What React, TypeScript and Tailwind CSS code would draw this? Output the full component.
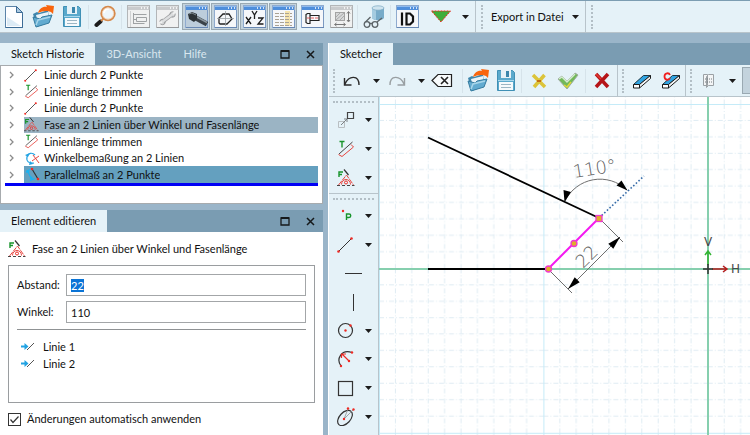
import { useEffect, useRef, type ReactNode } from 'react';
import clsx from 'clsx';

interface IconButtonProps {
  label: string;
  pressed?: boolean;
  children: ReactNode;
}

function IconButton({ label, pressed, children }: IconButtonProps) {
  return (
    <button
      type="button"
      aria-label={label}
      aria-pressed={pressed}
      className={clsx(
        'flex h-[27px] w-7 shrink-0 items-center justify-center',
        pressed && 'border border-[#9aa9b2] bg-[#c3d3dd]'
      )}
    >
      {children}
    </button>
  );
}

function Caret() {
  return (
    <svg width="7" height="4" viewBox="0 0 7 4" className="shrink-0">
      <path d="M0 0h7L3.5 4z" fill="#1c1c1c" />
    </svg>
  );
}

function Separator() {
  return <span className="mx-px h-6 w-px shrink-0 bg-[#d6e3ea]" />;
}

function Grip() {
  return <span className="h-6 w-0 shrink-0 border-l-2 border-dotted border-[#b3bfc6]" />;
}

/* ---------- icons ---------- */

function NewIcon() {
  return (
    <svg width="20" height="24" viewBox="0 0 20 24">
      <path d="M1.500 1.500h11l6 6v15h-17z" fill="#fdfeff" stroke="#5a83a8" />
      <path d="M3 21V12l14 9z" fill="#dcebf5" />
      <path d="M12.500 1.500v6h6z" fill="#a9c8e0" stroke="#3c6c96" />
      <path d="M1.500 22.500h17v-14" fill="none" stroke="#3c6c96" />
    </svg>
  );
}

function OpenIcon() {
  return (
    <svg width="22" height="23" viewBox="0 0 22 23">
      <path d="M1 9l4-2 2 1 9-3 1 12L5 22z" fill="#3f86ac" />
      <path d="M4 10l12-3v7H5z" fill="#e9f3f8" />
      <path d="M1 12l3 10 13-4 3-8-10 2-2 2z" fill="#62abd0" stroke="#357b9f" />
      <path d="M4 20l2-5 12-3" fill="none" stroke="#a8d6ea" strokeWidth="1.500" />
      <path d="M6 8c1-4 5-7 9-6l-1-2 8 1-1 8-2-2c-4-2-9-1-13 1z" fill="#f9650d" />
    </svg>
  );
}

function SaveIcon() {
  return (
    <svg width="20" height="23" viewBox="0 0 20 23">
      <path d="M1.500 1.500h15l2 2v18h-17z" fill="#5aa9cc" stroke="#4090b5" />
      <path d="M5 1h10v8H5z" fill="#e6f2f8" />
      <path d="M10 2h3v6h-3z" fill="#3b86ac" />
      <path d="M3 13h14v8H3z" fill="#f6fafc" />
      <path d="M5 15.500h10M5 18.500h10" stroke="#9cb6c4" />
      <path d="M2 11.500h16" stroke="#aad8ec" />
    </svg>
  );
}

function SearchIcon() {
  return (
    <svg width="22" height="23" viewBox="0 0 22 23">
      <path d="M2.500 20l4-3.500" stroke="#1b1b1b" strokeWidth="4" strokeLinecap="round" />
      <path d="M7 16l2.500-2.500" stroke="#d5894c" strokeWidth="2" />
      <circle cx="14" cy="8.500" r="6.800" fill="#eef6fb" stroke="#d5894c" strokeWidth="1.800" />
      <path d="M10 8a4 4 0 0 1 5-4" stroke="#fff" strokeWidth="2" fill="none" />
      <circle cx="14" cy="8.500" r="5.600" fill="none" stroke="#f3c9a0" strokeWidth="0.700" />
    </svg>
  );
}

function WindowIcon({ muted, children }: { muted?: boolean; children: ReactNode }) {
  return (
    <svg width="23" height="23" viewBox="0 0 23 23">
      <rect x="0.500" y="0.500" width="22" height="22" fill={muted ? '#f0f1f1' : '#f5f7fa'} stroke={muted ? '#b3b6b8' : '#8fabcf'} />
      <rect x="1" y="1" width="21" height="4" fill={muted ? '#c9cbcd' : '#4f8fdc'} />
      <path d="M1 1.500h21" stroke={muted ? '#dcdedf' : '#8fbbee'} />
      <path d="M14 3h1M17 3h1M20 3h1" stroke="#fff" strokeWidth="1.500" />
      <path d="M1 22.500h22V5" fill="none" stroke={muted ? '#97999b' : '#6787b3'} />
      {children}
    </svg>
  );
}

function TreeWindowIcon() {
  return (
    <WindowIcon muted>
      <path d="M6.500 8v11M6.500 9.500h13M6.500 14.500h3M6.500 18.500h11M9.500 12.500h10v4h-10z" stroke="#9fa2a4" fill="none" />
      <path d="M3.500 6v16" stroke="#d0d2d3" />
    </WindowIcon>
  );
}

function WrenchWindowIcon() {
  return (
    <WindowIcon muted>
      <circle cx="6.500" cy="17" r="2.700" fill="#d3d5d6" stroke="#9b9d9f" />
      <circle cx="16.500" cy="9.500" r="2.700" fill="#d3d5d6" stroke="#9b9d9f" />
      <path d="M7 16.500l9-7" stroke="#9b9d9f" strokeWidth="4" />
      <path d="M6 17l11-8" stroke="#dddfe0" strokeWidth="2.500" />
      <path d="M3 18l3-1M17 9l2-2" stroke="#f0f1f1" strokeWidth="2" />
    </WindowIcon>
  );
}

function BoltWindowIcon() {
  return (
    <WindowIcon>
      <rect x="1" y="5" width="21" height="17" fill="#bccddb" />
      <path d="M9 12l13 7" stroke="#3a4248" strokeWidth="5" />
      <path d="M10 11l12 6.500" stroke="#8b979f" strokeWidth="1.500" />
      <path d="M3 9l4-2 5 2v5l-3 3-5-3z" fill="#2b3236" />
      <path d="M4 9l3-1 4 2" fill="none" stroke="#7d8990" />
    </WindowIcon>
  );
}

function SketchWindowIcon() {
  return (
    <WindowIcon>
      <path d="M5 18v-5l4-4h6l3 5-5 5H6z" fill="none" stroke="#222" strokeWidth="1.300" />
      <path d="M11.500 6v15M3 13.500h17" stroke="#979da2" strokeWidth="0.800" />
    </WindowIcon>
  );
}

function XyzWindowIcon() {
  return (
    <WindowIcon>
      <g stroke="#1d1d1d" strokeWidth="1.300" fill="none">
        <path d="M3 12l5 7M8 12l-5 7M9 6l2.500 4L14 6M11.500 10v4M15 13h5l-5 6h5.500" />
      </g>
    </WindowIcon>
  );
}

function TableWindowIcon() {
  return (
    <WindowIcon>
      <rect x="13" y="6" width="5" height="15" fill="#f5e4ae" />
      <path d="M3 8.500h17M3 11.500h17M3 14.500h17M3 17.500h17M3 20.500h17" stroke="#aaa294" strokeDasharray="4 1" />
    </WindowIcon>
  );
}

function ScrewWindowIcon() {
  return (
    <WindowIcon>
      <path d="M5 9.500l1.500-1H9v10H6.500l-1.500-1z M9 10.500h9v5H9" fill="none" stroke="#222" strokeWidth="1.200" />
      <path d="M6 13h11" stroke="#e23b3b" strokeDasharray="3 1" strokeWidth="0.800" />
    </WindowIcon>
  );
}

function HatchWindowIcon() {
  return (
    <WindowIcon muted>
      <rect x="5.500" y="7.500" width="9" height="8" fill="#d6d7d8" stroke="#a3a3a3" />
      <path d="M6 12l4-4M6 15l8-7M10 15l4-4" stroke="#9d9fa0" strokeWidth="0.800" />
      <path d="M18.500 7v9M5 19.500h10" stroke="#777" />
      <path d="M17 8.500l1.500-2 1.500 2M17 15l1.500 2 1.500-2M6.500 18l-2 1.500 2 1.500M13.500 18l2 1.500-2 1.500" fill="none" stroke="#777" />
    </WindowIcon>
  );
}

function GlassesIcon() {
  return (
    <svg width="23" height="24" viewBox="0 0 23 24">
      <path d="M9 3v10c2 3 10 3 12 0V3z" fill="#77abc9" />
      <path d="M9 3v10c1 1 3 2 4 2V3z" fill="#a4cbe0" />
      <ellipse cx="15" cy="3" rx="6" ry="2.200" fill="#cfe4ef" stroke="#7ba8c1" strokeWidth="0.700" />
      <g fill="none" stroke="#5c6468" strokeWidth="1.300">
        <circle cx="4" cy="19.500" r="2.800" />
        <circle cx="12" cy="19.500" r="2.800" />
        <path d="M6.500 18.500h3M2.500 17l5-5M14 17l5-4" />
      </g>
    </svg>
  );
}

function IdWindowIcon() {
  return (
    <WindowIcon>
      <path d="M6 7.500v13" stroke="#111" strokeWidth="2.200" />
      <path d="M10.500 8.500H14l3 3v5l-3 3h-3.500z" fill="none" stroke="#111" strokeWidth="2.200" />
    </WindowIcon>
  );
}

function UndoIcon({ color }: { color: string }) {
  return (
    <svg width="18" height="13" viewBox="0 0 18 13">
      <path d="M2 10C6 1 16 1 16 11M1.500 4v7h7" fill="none" stroke={color} strokeWidth="1.400" />
    </svg>
  );
}

function EraserIcon({ all }: { all?: boolean }) {
  return (
    <svg width="20" height="18" viewBox="0 0 20 18">
      <path d="M1.500 12.500l10-9h7l-11 9z" fill="#2fa4e2" stroke="#1f3542" />
      <path d="M1.500 12.500h6v3.500h-6z" fill="#fff" stroke="#1b1b1b" />
      <path d="M7.500 12.500l11-9v3l-11 9.500z" fill="#f2f5f6" stroke="#1b1b1b" />
      {all && <path d="M9 3C8 .5 3.500.5 3.500 4.500S8 8.500 9 6" fill="none" stroke="#f11f1f" strokeWidth="1.800" />}
    </svg>
  );
}

function LineIcon({ size = 16 }: { size?: number }) {
  return (
    <svg width={size} height={size} viewBox="0 0 16 16">
      <path d="M1.500 14.500l13-13" stroke="#333" />
      <circle cx="1.500" cy="14.500" r="1.300" fill="#ee2a24" />
      <circle cx="14.500" cy="1.500" r="1.300" fill="#ee2a24" />
    </svg>
  );
}

function TrimIcon({ size = 18 }: { size?: number }) {
  return (
    <svg width={size} height={size} viewBox="0 0 18 18">
      <path d="M2.500 1.500h5M5 1.500v6" stroke="#17942b" strokeWidth="1.400" />
      <path d="M2 14L15.500 2" stroke="#444" />
      <path d="M1.500 14.500l3.500 2L16.500 7 14 4.500" fill="none" stroke="#e8443e" />
    </svg>
  );
}

function ChamferIcon({ size = 18 }: { size?: number }) {
  return (
    <svg width={size} height={size} viewBox="0 0 18 18">
      <path d="M2 8V3h4M2 5.500h3" fill="none" stroke="#17942b" strokeWidth="1.400" />
      <path d="M7 0.500l4.500 5.500" stroke="#333" strokeWidth="1.200" />
      <path d="M1.500 16l8-10 7 10" fill="none" stroke="#e8443e" strokeDasharray="5 1" />
      <path d="M4.500 15.500c0-3 2-5 4.500-5s4.500 2 4.500 5" fill="none" stroke="#e8443e" />
      <path d="M0 16.500h17.500" stroke="#444" strokeDasharray="3 2" />
      <circle cx="9" cy="13.500" r="1.500" fill="none" stroke="#ee2a24" />
    </svg>
  );
}

function AngleIcon() {
  return (
    <svg width="16" height="15" viewBox="0 0 16 15">
      <path d="M8 10l7-5M9 4l6 8" stroke="#e8443e" fill="none" />
      <path d="M11 4C8 1 4 2 3 6s2 7 7 6" fill="none" stroke="#23a3e3" strokeWidth="1.200" />
      <path d="M1 4l5-2-2 4zM5 14l1-4 3 3z" fill="#23a3e3" />
    </svg>
  );
}

function ParallelIcon() {
  return (
    <svg width="16" height="15" viewBox="0 0 16 15">
      <path d="M8 2l6 10" stroke="#333" strokeWidth="1.200" />
      <circle cx="8" cy="2" r="1.300" fill="#ee2a24" />
      <circle cx="14" cy="12" r="1.300" fill="#ee2a24" />
      <path d="M3.500 4l4 8M2 4.500l4-2M6 13.500l5-2" stroke="#17b3f4" strokeWidth="1.200" />
      <path d="M2 6l1-3 3 2zM9 13l-3-1 2-3z" fill="#17b3f4" />
    </svg>
  );
}

function LinkedLineIcon() {
  return (
    <svg width="14" height="10" viewBox="0 0 14 10">
      <path d="M0 4.500h4" stroke="#23a3e3" strokeWidth="2" />
      <path d="M3.500 1l4 3.500-4 3.500z" fill="#23a3e3" />
      <path d="M6 8l7-7" stroke="#555" />
    </svg>
  );
}

/* ---------- toolbars ---------- */

function MainToolbar() {
  return (
    <header className="flex h-8 items-center gap-px overflow-hidden border-b border-[#b8c4cb] bg-[#e5f2f8]">
      <IconButton label="Neu"><NewIcon /></IconButton>
      <IconButton label="Öffnen"><OpenIcon /></IconButton>
      <IconButton label="Speichern"><SaveIcon /></IconButton>
      <Separator />
      <IconButton label="Suchen"><SearchIcon /></IconButton>
      <Separator />
      <IconButton label="Struktur"><TreeWindowIcon /></IconButton>
      <IconButton label="Werkzeug"><WrenchWindowIcon /></IconButton>
      <IconButton label="3D-Ansicht" pressed><BoltWindowIcon /></IconButton>
      <IconButton label="Skizze" pressed><SketchWindowIcon /></IconButton>
      <IconButton label="Variablen" pressed><XyzWindowIcon /></IconButton>
      <IconButton label="Tabelle" pressed><TableWindowIcon /></IconButton>
      <IconButton label="Vorschau"><ScrewWindowIcon /></IconButton>
      <IconButton label="Bemaßung"><HatchWindowIcon /></IconButton>
      <Separator />
      <IconButton label="Prüfen"><GlassesIcon /></IconButton>
      <Separator />
      <IconButton label="ID"><IdWindowIcon /></IconButton>
      <button type="button" aria-label="Filter" className="flex h-full shrink-0 items-center gap-2.5 border-r border-[#b8c4cb] pr-1.5 pl-2">
        <svg width="22" height="13" viewBox="0 0 22 13">
          <path d="M1.500 1h19L11 12z" fill="#3fae3a" stroke="#f0291f" strokeDasharray="2 1" />
        </svg>
        <Caret />
      </button>
      <div className="flex h-full shrink-0 items-center border-r border-[#b8c4cb] pr-1.5 pl-1">
        <Grip />
        <button type="button" className="flex items-center gap-2 pl-2">
          Export in Datei
          <Caret />
        </button>
      </div>
      <div className="flex h-full items-center pl-1">
        <Grip />
      </div>
    </header>
  );
}

function SketchToolbar() {
  return (
    <div className="flex h-8 shrink-0 items-center overflow-hidden border-b border-[#b8c4cb] bg-[#e5f2f8] pl-1">
      <Grip />
      <button type="button" aria-label="Rückgängig" className="flex shrink-0 items-center gap-3 pl-2">
        <UndoIcon color="#2b2b2b" />
        <Caret />
      </button>
      <button type="button" aria-label="Wiederholen" className="flex shrink-0 items-center gap-3 pl-2">
        <span className="-scale-x-100"><UndoIcon color="#999fa2" /></span>
        <Caret />
      </button>
      <button type="button" aria-label="Löschen" className="shrink-0 pr-2 pl-1.5">
        <svg width="22" height="15" viewBox="0 0 22 15">
          <path d="M1 7.500l6-6h13.500v12H7z" fill="#f8fbfc" stroke="#222" strokeWidth="1.200" />
          <path d="M10 4l7 7M17 4l-7 7" stroke="#222" strokeWidth="1.600" />
        </svg>
      </button>
      <Separator />
      <IconButton label="Skizze öffnen"><OpenIcon /></IconButton>
      <IconButton label="Skizze speichern"><SaveIcon /></IconButton>
      <Separator />
      <div className="flex shrink-0 items-center gap-px px-0.5">
        <IconButton label="Abbrechen">
          <svg width="16" height="16" viewBox="0 0 16 16">
            <path d="M2 2l12 12M13.500 2L3 14" stroke="#dcc439" strokeWidth="3.500" />
            <path d="M6 8h4" stroke="#c46d12" strokeWidth="2" />
          </svg>
        </IconButton>
        <IconButton label="Übernehmen">
          <svg width="22" height="18" viewBox="0 0 22 18">
            <path d="M1 7l4-3 5 5 8-8 3 2-11 14z" fill="#72b95a" stroke="#9fada0" />
            <path d="M2 7l3-2 5 5 8-8" fill="none" stroke="#d5ecd1" strokeWidth="1.500" />
            <path d="M7 13l3 2 4-5" fill="none" stroke="#e0d838" strokeWidth="1.500" />
          </svg>
        </IconButton>
      </div>
      <Separator />
      <div className="flex h-full shrink-0 items-center border-r border-[#b8c4cb] px-px">
        <IconButton label="Schließen">
          <svg width="16" height="17" viewBox="0 0 16 17">
            <path d="M2 2l12 13M14 2L2 15" stroke="#b51418" strokeWidth="3.500" />
            <path d="M2 2l5 5" stroke="#e23a32" strokeWidth="1.500" />
          </svg>
        </IconButton>
      </div>
      <div className="flex h-full shrink-0 items-center gap-1 border-r border-[#b8c4cb] pl-1">
        <Grip />
        <div className="flex gap-px">
          <IconButton label="Radieren"><EraserIcon /></IconButton>
          <IconButton label="Alles radieren"><EraserIcon all /></IconButton>
        </div>
      </div>
      <div className="flex h-full min-w-0 grow items-center pl-1">
        <Grip />
        <button type="button" aria-label="Ebene" className="flex shrink-0 items-center gap-3.5 pr-1.5 pl-2.5">
          <svg width="13" height="16" viewBox="0 0 13 16">
            <path d="M1.500 1.500h4v11h-4zM6.500 1.500h5v11h-5l-2 2v-11z" fill="#f3f5f6" stroke="#9ba1a5" />
            <path d="M3 6h7M3 9h7" stroke="#777c80" strokeDasharray="1 1" />
          </svg>
          <Caret />
        </button>
        <IconButton label="Raster" pressed>
          <svg width="14" height="14" viewBox="0 0 14 14">
            <path d="M1 3h7M4 0v6" stroke="#23a3e3" strokeWidth="2" />
          </svg>
        </IconButton>
      </div>
    </div>
  );
}

interface ToolProps {
  label: string;
  plain?: boolean;
  children: ReactNode;
}

function Tool({ label, plain, children }: ToolProps) {
  return (
    <button
      type="button"
      aria-label={label}
      className={clsx('flex w-full items-center', plain ? 'justify-center' : 'justify-between pr-1.5 pl-2')}
    >
      {children}
      {!plain && <Caret />}
    </button>
  );
}

function ToolColumn() {
  return (
    <div className="flex w-[50px] shrink-0 flex-col border-r border-[#b8c4cb] bg-[#e5f2f8]">
      <div className="border-b border-[#b8c4cb] pt-1">
        <div className="mx-1 border-t-2 border-dotted border-[#b3bfc6]" />
        <div className="grid h-[90px] grid-rows-3 pt-0.5 pb-px">
          <Tool label="Verschieben">
            <svg width="18" height="18" viewBox="0 0 18 18">
              <path d="M10.500 1.500h6v6h-6z" fill="none" stroke="#444" strokeWidth="1.200" />
              <path d="M1.500 10.500h6v6h-6z" fill="none" stroke="#b9bfc2" />
              <path d="M4 14l6-6M10 11V8H7" fill="none" stroke="#7c8285" />
            </svg>
          </Tool>
          <Tool label="Trimmen"><TrimIcon /></Tool>
          <Tool label="Fase"><ChamferIcon /></Tool>
        </div>
      </div>
      <div className="pt-1">
        <div className="mx-1 border-t-2 border-dotted border-[#b3bfc6]" />
        <div className="grid h-[231px] grid-rows-8 pt-0.5">
          <Tool label="Punkt">
            <svg width="18" height="16" viewBox="0 0 18 16">
              <circle cx="6" cy="3" r="1.200" fill="#ee2a24" />
              <path d="M9.500 12V6H12a1.500 1.500 0 0 1 0 3.500H9.500" fill="none" stroke="#17942b" strokeWidth="1.400" />
            </svg>
          </Tool>
          <Tool label="Linie"><LineIcon /></Tool>
          <Tool label="Horizontale" plain>
            <svg width="17" height="3" viewBox="0 0 17 3"><path d="M0 1.500h17" stroke="#333" /></svg>
          </Tool>
          <Tool label="Vertikale" plain>
            <svg width="3" height="17" viewBox="0 0 3 17"><path d="M1.500 0v17" stroke="#333" /></svg>
          </Tool>
          <Tool label="Kreis">
            <svg width="17" height="17" viewBox="0 0 17 17">
              <circle cx="8.500" cy="8.500" r="7" fill="none" stroke="#333" strokeWidth="1.200" />
              <circle cx="8.500" cy="8.500" r="1.200" fill="#ee2a24" />
              <circle cx="13.500" cy="3.500" r="1.200" fill="#ee2a24" />
            </svg>
          </Tool>
          <Tool label="Bogen">
            <svg width="17" height="18" viewBox="0 0 17 18">
              <path d="M4 16C-1 9 4-1 15 2.500" fill="none" stroke="#333" strokeWidth="1.200" />
              <path d="M12 11L5 4M4.500 8V4H9" fill="none" stroke="#ee2a24" strokeWidth="1.200" />
              <g fill="#ee2a24">
                <circle cx="4" cy="16" r="1.200" />
                <circle cx="12" cy="11" r="1.200" />
                <circle cx="15" cy="2.500" r="1.200" />
              </g>
            </svg>
          </Tool>
          <Tool label="Rechteck">
            <svg width="17" height="17" viewBox="0 0 17 17">
              <rect x="1.500" y="1.500" width="14" height="14" fill="none" stroke="#333" strokeWidth="1.200" />
            </svg>
          </Tool>
          <Tool label="Ellipse">
            <svg width="19" height="19" viewBox="0 0 19 19">
              <ellipse cx="8" cy="11" rx="9" ry="5.500" transform="rotate(-47 8 11)" fill="none" stroke="#333" strokeWidth="1.200" />
              <path d="M7 12l9-9M7 12l4-10" stroke="#8c9093" strokeWidth="0.800" />
              <g fill="#ee2a24">
                <circle cx="7" cy="12" r="1.200" />
                <circle cx="11" cy="1.500" r="1.200" />
                <circle cx="16.500" cy="2.500" r="1.200" />
              </g>
            </svg>
          </Tool>
        </div>
      </div>
    </div>
  );
}

/* ---------- panels ---------- */

function WindowControls() {
  return (
    <div className="ml-auto flex items-center gap-4 pr-2">
      <button type="button" aria-label="Maximieren">
        <svg width="10" height="9" viewBox="0 0 10 9">
          <path d="M1 1h8v7H1z" fill="none" stroke="#16191b" strokeWidth="1.300" />
          <path d="M1 1h8" stroke="#16191b" strokeWidth="2" />
        </svg>
      </button>
      <button type="button" aria-label="Schließen">
        <svg width="9" height="9" viewBox="0 0 9 9">
          <path d="M1 1l7 7M8 1L1 8" stroke="#16191b" strokeWidth="1.500" />
        </svg>
      </button>
    </div>
  );
}

interface TabBarProps {
  tabs: string[];
  controls?: boolean;
}

function TabBar({ tabs, controls }: TabBarProps) {
  return (
    <div className="flex h-[22px] shrink-0 items-stretch bg-[#7a9cb2]">
      <div role="tablist" className="flex">
        {tabs.map((tab, i) => (
          <button
            key={tab}
            type="button"
            role="tab"
            aria-selected={i === 0}
            className={clsx('px-[11px]', i === 0 ? 'bg-[#e5f2f8]' : 'text-[#d9e7ef]')}
          >
            {tab}
          </button>
        ))}
      </div>
      {controls && <WindowControls />}
    </div>
  );
}

const HISTORY = [
  { text: 'Linie durch 2 Punkte', icon: <LineIcon size={13} />, bg: '' },
  { text: 'Linienlänge trimmen', icon: <TrimIcon size={15} />, bg: '' },
  { text: 'Linie durch 2 Punkte', icon: <LineIcon size={13} />, bg: '' },
  { text: 'Fase an 2 Linien über Winkel und Fasenlänge', icon: <ChamferIcon size={15} />, bg: 'bg-[#9bb4c4]' },
  { text: 'Linienlänge trimmen', icon: <TrimIcon size={15} />, bg: '' },
  { text: 'Winkelbemaßung an 2 Linien', icon: <AngleIcon />, bg: '' },
  { text: 'Parallelmaß an 2 Punkte', icon: <ParallelIcon />, bg: 'bg-[#64a0bf]' },
];

function HistoryPanel() {
  return (
    <section>
      <TabBar tabs={['Sketch Historie', '3D-Ansicht', 'Hilfe']} controls />
      <div className="h-[139px] border border-[#a7abae] bg-white px-1 pt-px">
        <ul className="grid h-[119px] grid-rows-7 border-b-3 border-[#0000f5]">
          {HISTORY.map((item, i) => (
            <li key={i} className="flex min-h-0 items-stretch pl-1">
              <span className="flex w-3 shrink-0 items-center">
                <svg width="5" height="8" viewBox="0 0 5 8">
                  <path d="M1 1l3 3-3 3" fill="none" stroke="#8b8b8b" strokeWidth="1.300" />
                </svg>
              </span>
              <span className={clsx('ml-[3px] flex min-w-0 grow items-center overflow-hidden', item.bg)}>
                <span className="flex w-5 shrink-0 items-center justify-start">{item.icon}</span>
                <span className="truncate">{item.text}</span>
              </span>
            </li>
          ))}
        </ul>
      </div>
    </section>
  );
}

function ElementPanel() {
  const distanceRef = useRef<HTMLInputElement>(null);

  useEffect(() => {
    distanceRef.current?.select();
  }, []);

  const inputCls =
    'h-[22px] w-full border border-[#a3a6a8] bg-white px-1 outline-none selection:bg-[#0a74d6] selection:text-white';

  return (
    <section className="flex min-h-0 grow flex-col">
      <TabBar tabs={['Element editieren']} controls />
      <form className="flex grow flex-col bg-white px-2 pb-2">
        <h2 className="flex h-[33px] items-center gap-1.5">
          <ChamferIcon />
          Fase an 2 Linien über Winkel und Fasenlänge
        </h2>
        <div className="grow border border-[#9a9da0] px-2 pt-2">
          <div className="grid grid-cols-[49px_1fr] items-center gap-y-[5px]">
            <label htmlFor="distance">Abstand:</label>
            <input id="distance" ref={distanceRef} defaultValue="22" className={inputCls} />
            <label htmlFor="angle">Winkel:</label>
            <input id="angle" defaultValue="110" className={inputCls} />
          </div>
          <hr className="mt-1.5 mb-2 border-[#8f9294]" />
          <ul className="pl-1">
            {['Linie 1', 'Linie 2'].map(line => (
              <li key={line} className="flex h-[17px] items-center gap-2">
                <LinkedLineIcon />
                {line}
              </li>
            ))}
          </ul>
        </div>
        <label className="mt-2 flex items-center gap-1.5">
          <span className="relative flex">
            <input
              type="checkbox"
              defaultChecked
              className="peer h-[13px] w-[13px] appearance-none border border-[#333] bg-white"
            />
            <svg
              width="13"
              height="13"
              viewBox="0 0 13 13"
              className="pointer-events-none absolute inset-0 hidden peer-checked:block"
            >
              <path d="M2.500 6.500L5 9.500l5.500-6" fill="none" stroke="#333" strokeWidth="1.200" />
            </svg>
          </span>
          Änderungen automatisch anwenden
        </label>
      </form>
    </section>
  );
}

/* ---------- drawing area ---------- */

const MINOR = Array.from({ length: 9 }, (_, i) => (i + 1) * 16.4);

function SketchCanvas() {
  return (
    <svg className="h-full min-w-0 grow bg-white">
      <defs>
        <pattern id="grid" x="0" y="7" width="164.400" height="164.400" patternUnits="userSpaceOnUse">
          {MINOR.map(p => (
            <g key={p} stroke="#dfecf3" strokeDasharray="5 2 1 2">
              <path d={`M${p} 0V165`} />
              <path d={`M0 ${p}H165`} />
            </g>
          ))}
          <path d="M0.500 0V165M0 0.500H165" stroke="#c5ebf8" />
        </pattern>
        <marker id="arrow" markerWidth="16" markerHeight="8" refX="15" refY="4" orient="auto-start-reverse" markerUnits="userSpaceOnUse">
          <path d="M2 0.500L15 4 2 7.500z" fill="#000" />
        </marker>
      </defs>
      <rect width="100%" height="100%" fill="url(#grid)" />

      {/* axes */}
      <path d="M0 172H2000M329 0V2000" stroke="#86cfae" strokeWidth="2" />

      {/* contour */}
      <path d="M49 40.500L220 121M49 172H169" stroke="#000" strokeWidth="1.800" />
      <path d="M220 121L265 79" stroke="#356aa8" strokeWidth="1.600" strokeDasharray="1.600 2" />

      {/* dimensions */}
      <g fill="none" stroke="#6f6f6f">
        <path d="M220 121l24 24M169 172l24 24" />
        <path d="M189 192L241 140" markerStart="url(#arrow)" markerEnd="url(#arrow)" />
        <path d="M186 104A39 39 0 0 1 248 93" />
      </g>
      <path d="M185.500 105l-1-12 7.500 2zM248.500 93.500l-11-5 5-5z" fill="#000" />
      <g fill="#5f5f5f" className="font-['DejaVu_Sans',sans-serif] text-[18px] font-extralight">
        <text x="195" y="81" transform="rotate(-9 195 81)">110°</text>
        <text x="204" y="172" transform="rotate(-45 204 172)">22</text>
      </g>

      {/* chamfer */}
      <path d="M169 172L220 121" stroke="#f419f0" strokeWidth="2" />
      <g fill="#dfae2a" stroke="#f03ad0" strokeWidth="1.300">
        <circle cx="169.500" cy="172" r="3" />
        <circle cx="195" cy="146.500" r="3" />
        <rect x="217" y="118.500" width="6" height="6" />
      </g>

      {/* origin */}
      <path d="M329 168V154M326 158l3-4 3 4" fill="none" stroke="#32b432" strokeWidth="1.500" />
      <path d="M333 172h15M344 169l4 3-4 3" fill="none" stroke="#b51b1b" strokeWidth="1.500" />
      <path d="M324 172h10M329 167v10" stroke="#333" strokeWidth="1.500" />
      <g fill="#4a4a4a" className="font-['DejaVu_Sans',sans-serif] text-[12px]">
        <text x="325" y="149">V</text>
        <text x="352" y="176">H</text>
      </g>
    </svg>
  );
}

export default function App() {
  return (
    <div className="flex h-screen flex-col overflow-hidden border-t border-[#7c9db2] bg-[#9ab5c9] font-[Lato,sans-serif] text-[11px] leading-4 text-[#111] [font-variant-ligatures:none]">
      <MainToolbar />
      <main className="mt-2.5 flex min-h-0 grow gap-[5px]">
        <aside className="flex w-[323px] shrink-0 flex-col gap-1.5">
          <HistoryPanel />
          <ElementPanel />
        </aside>
        <section className="flex min-w-0 grow flex-col border-l border-white">
          <TabBar tabs={['Sketcher']} />
          <SketchToolbar />
          <div className="flex min-h-0 grow">
            <ToolColumn />
            <SketchCanvas />
          </div>
        </section>
      </main>
    </div>
  );
}
